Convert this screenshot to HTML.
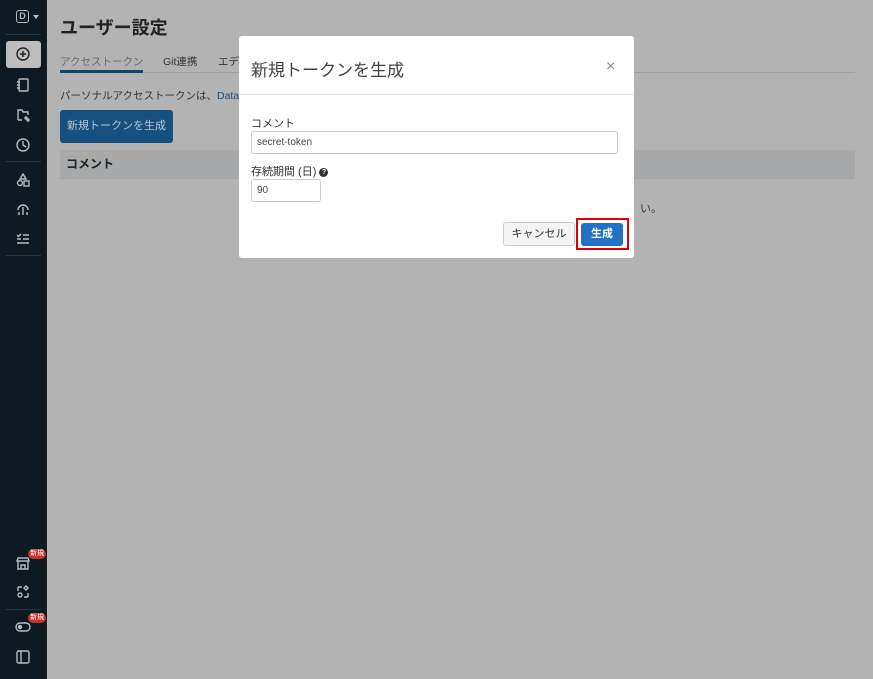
<!DOCTYPE html>
<html><head><meta charset="utf-8"><style>
*{box-sizing:border-box;margin:0;padding:0}
body{width:873px;height:679px;overflow:hidden;font-family:"Liberation Sans","Noto Sans CJK JP",sans-serif;background:#b3b3b3;position:relative}
.sb{position:absolute;left:0;top:0;width:47px;height:679px;background:#0d1a21;border-right:1px solid #222}
.ic{position:absolute;left:14px;width:18px;height:18px}
.ic svg{width:18px;height:18px;stroke:#b8bcbf;fill:none;stroke-width:1.4}
.sep{position:absolute;left:6px;width:35px;height:1px;background:#2c373d}
.badge{position:absolute;left:28px;width:18px;height:10px;background:#c9302c;border-radius:5px;color:#fff;font-size:7px;line-height:10px;text-align:center}
.main{position:absolute;left:48px;top:0;right:0;bottom:0}
h1{position:absolute;left:12px;top:14px;font-size:18px;color:#222;font-weight:bold;white-space:nowrap}
.tabs{position:absolute;left:12px;top:52px;right:18px;height:21px;border-bottom:1px solid #a0a0a0;font-size:10.5px;color:#333}
.tabs span{position:absolute;top:2px;white-space:nowrap}
.dlg{position:absolute;left:239px;top:36px;width:395px;height:222px;background:#fff;border-radius:3px}
.inp{position:absolute;border:1px solid #ccc;border-radius:3px;font-size:10px;color:#444;padding-left:5px;line-height:21px;white-space:nowrap}
</style></head><body>
<div class="sb">
 <div style="position:absolute;left:16px;top:10px;width:13px;height:13px;border:1.5px solid #b8bcbf;border-radius:3px;color:#b8bcbf;font-size:9px;font-weight:bold;text-align:center;line-height:10px">D</div>
 <div style="position:absolute;left:33px;top:15px;border:3px solid transparent;border-top:4px solid #b8bcbf"></div>
 <div class="sep" style="top:34px"></div>
 <div style="position:absolute;left:6px;top:41px;width:35px;height:27px;background:#bdbdbd;border-radius:3px"></div>
 <div class="ic" style="top:45px"><svg viewBox="0 0 18 18" style="stroke:#222"><circle cx="9" cy="9" r="6"/><path d="M9 6v6M6 9h6"/></svg></div>
 <div class="ic" style="top:76px"><svg viewBox="0 0 18 18"><rect x="5" y="3" width="9" height="12" rx="1"/><path d="M3 6h3M3 9h3M3 12h3"/></svg></div>
 <div class="ic" style="top:106px"><svg viewBox="0 0 18 18"><path d="M4 14V4h4l1 2h5v3M4 14h4"/><circle cx="12" cy="12" r="1"/><circle cx="14" cy="14" r="1"/></svg></div>
 <div class="ic" style="top:136px"><svg viewBox="0 0 18 18"><circle cx="9" cy="9" r="6"/><path d="M9 5v4l3 2"/></svg></div>
 <div class="sep" style="top:161px"></div>
 <div class="ic" style="top:171px"><svg viewBox="0 0 18 18"><path d="M9 3l3 5H6z"/><circle cx="6" cy="12" r="2.5"/><rect x="10" y="10" width="5" height="5"/></svg></div>
 <div class="ic" style="top:200px"><svg viewBox="0 0 18 18"><path d="M4 10a5 5 0 0 1 10 0M9 7v8M5 12v3M13 12v3"/></svg></div>
 <div class="ic" style="top:230px"><svg viewBox="0 0 18 18"><path d="M3 5l1.5 1.5L7 4M9 5h6M9 9h6M3 13h12M3 9h4"/></svg></div>
 <div class="sep" style="top:255px"></div>
 <div class="ic" style="top:554px"><svg viewBox="0 0 18 18"><path d="M3 7h12l-1-3H4zM4 7v8h10V7M7 15v-4h4v4"/></svg></div>
 <div class="badge" style="top:549px">新規</div>
 <div class="ic" style="top:583px"><svg viewBox="0 0 18 18"><path d="M4 4h4M4 4v4M14 14h-4M14 14v-4"/><circle cx="6" cy="12" r="2"/><path d="M12 3l2 2-2 2-2-2z"/></svg></div>
 <div class="sep" style="top:609px"></div>
 <div class="ic" style="top:618px"><svg viewBox="0 0 18 18"><rect x="2" y="5" width="14" height="8" rx="4"/><circle cx="6" cy="9" r="1.5" fill="#b8bcbf"/></svg></div>
 <div class="badge" style="top:613px">新規</div>
 <div class="ic" style="top:648px"><svg viewBox="0 0 18 18"><rect x="3" y="3" width="12" height="12" rx="1.5"/><path d="M7 3v12"/></svg></div>
</div>
<div class="main">
 <h1>ユーザー設定</h1>
 <div class="tabs">
  <span style="left:0;color:#5d6a75">アクセストークン</span>
  <div style="position:absolute;left:0;top:18px;width:83px;height:3px;background:#16456b"></div>
  <span style="left:103px">Git連携</span><span style="left:158px">エディ</span>
 </div>
 <div style="position:absolute;left:12px;top:88px;font-size:10.5px;color:#333;white-space:nowrap">パーソナルアクセストークンは、<span style="color:#1a4a73">Datab</span></div>
 <div style="position:absolute;left:12px;top:110px;width:113px;height:33px;background:#16507e;border-radius:3px;color:#b6c6d4;font-size:11px;line-height:33px;text-align:center;white-space:nowrap">新規トークンを生成</div>
 <div style="position:absolute;left:12px;top:150px;width:795px;height:29px;background:#a8a9aa;border-bottom:1px solid #9fa5aa;font-size:12px;font-weight:bold;color:#222;line-height:28px;padding-left:6px">コメント</div>
 <div style="position:absolute;left:592px;top:200px;font-size:11px;color:#333">い。</div>
</div>
<div class="dlg">
 <div style="position:absolute;left:12px;top:20px;font-size:17px;color:#444;white-space:nowrap">新規トークンを生成</div>
 <div style="position:absolute;left:367px;top:22px;font-size:16px;color:#888">×</div>
 <div style="position:absolute;left:0;right:0;top:58px;height:1px;background:#e5e5e5"></div>
 <div style="position:absolute;left:12px;top:79px;font-size:11px;color:#333">コメント</div>
 <div class="inp" style="left:12px;top:95px;width:367px;height:23px">secret-token</div>
 <div style="position:absolute;left:12px;top:127px;font-size:11px;color:#333;white-space:nowrap">存続期間 (日) <span style="display:inline-block;width:9px;height:9px;border-radius:50%;background:#333;color:#fff;font-size:7px;line-height:9px;text-align:center;font-weight:bold;vertical-align:middle">?</span></div>
 <div class="inp" style="left:12px;top:143px;width:70px;height:23px">90</div>
 <div style="position:absolute;left:264px;top:186px;width:72px;height:24px;border:1px solid #ccc;border-radius:3px;background:#f4f4f4;font-size:11px;color:#333;text-align:center;line-height:22px">キャンセル</div>
 <div style="position:absolute;left:337px;top:182px;width:53px;height:32px;border:2px solid #e00000"></div>
 <div style="position:absolute;left:342px;top:187px;width:42px;height:23px;background:#2272c3;border-radius:3px;color:#fff;font-size:11px;font-weight:bold;text-align:center;line-height:23px">生成</div>
</div>
</body></html>
